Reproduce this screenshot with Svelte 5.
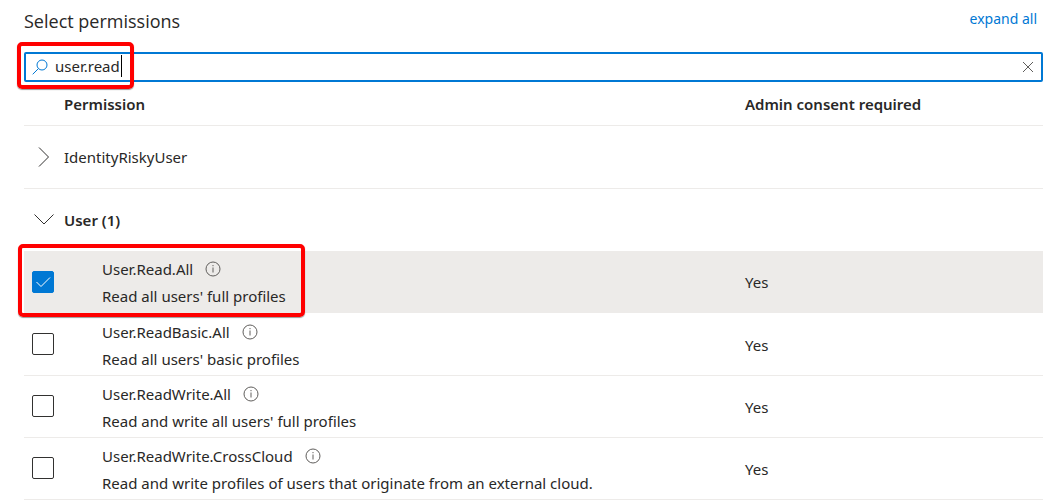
<script lang="ts">
	type Permission = {
		name: string;
		description: string;
		adminConsent: boolean;
		selected: boolean;
		highlighted?: boolean;
	};

	type Group = {
		name: string;
		expanded: boolean;
		permissions: Permission[];
	};

	let query = $state('user.read');

	let groups = $state<Group[]>([
		{ name: 'IdentityRiskyUser', expanded: false, permissions: [] },
		{
			name: 'User',
			expanded: true,
			permissions: [
				{
					name: 'User.Read.All',
					description: "Read all users' full profiles",
					adminConsent: true,
					selected: true,
					highlighted: true
				},
				{
					name: 'User.ReadBasic.All',
					description: "Read all users' basic profiles",
					adminConsent: true,
					selected: false
				},
				{
					name: 'User.ReadWrite.All',
					description: "Read and write all users' full profiles",
					adminConsent: true,
					selected: false
				},
				{
					name: 'User.ReadWrite.CrossCloud',
					description: 'Read and write profiles of users that originate from an external cloud.',
					adminConsent: true,
					selected: false
				}
			]
		}
	]);

	function selectedCount(group: Group): number {
		return group.permissions.filter((p) => p.selected).length;
	}

	function expandAll(event: MouseEvent) {
		event.preventDefault();
		for (const group of groups) group.expanded = true;
	}
</script>

<main class="panel">
	<header class="panel-header">
		<h1>Select permissions</h1>
		<a href="#expand" onclick={expandAll}>expand all</a>
	</header>

	<div class="search">
		<svg class="search-icon" viewBox="0 0 16 16" aria-hidden="true">
			<circle cx="10" cy="6" r="5" />
			<path d="M6.5 9.5 L0.7 15.3" />
		</svg>
		<input type="text" aria-label="Search permissions" bind:value={query} />
		<button class="clear" aria-label="Clear search" onclick={() => (query = '')}>
			<svg viewBox="0 0 12 12" aria-hidden="true">
				<path d="M1 1 L11 11 M11 1 L1 11" />
			</svg>
		</button>
		{#if query}
			<span class="caret"></span>
		{/if}
		<span class="callout callout-search"></span>
	</div>

	<table>
		<colgroup>
			<col class="col-toggle" />
			<col class="col-indent" />
			<col />
			<col class="col-consent" />
		</colgroup>
		<thead>
			<tr>
				<td></td>
				<th colspan="2" scope="col">Permission</th>
				<th scope="col">Admin consent required</th>
			</tr>
		</thead>
		<tbody>
			{#each groups as group (group.name)}
				<tr class="group">
					<td class="toggle-cell">
						<button
							class="toggle"
							aria-label="Toggle {group.name}"
							aria-expanded={group.expanded}
							onclick={() => (group.expanded = !group.expanded)}
						>
							<svg viewBox="0 0 22 22" aria-hidden="true">
								{#if group.expanded}
									<path d="M1.5 5.5 L11 15 L20.5 5.5" />
								{:else}
									<path d="M6 1.5 L15.5 11 L6 20.5" />
								{/if}
							</svg>
						</button>
					</td>
					<td colspan="3" class:active={selectedCount(group) > 0}>
						{group.name}{selectedCount(group) > 0 ? ` (${selectedCount(group)})` : ''}
					</td>
				</tr>
				{#if group.expanded}
					{#each group.permissions as permission (permission.name)}
						<tr class="permission" class:selected={permission.selected}>
							<td class="check-cell">
								<input type="checkbox" id={permission.name} bind:checked={permission.selected} />
								{#if permission.highlighted}
									<span class="callout callout-row"></span>
								{/if}
							</td>
							<td></td>
							<td>
								<div class="name">
									<label for={permission.name}>{permission.name}</label>
									<button class="info" aria-label="About {permission.name}">
										<svg viewBox="0 0 16 16" aria-hidden="true">
											<circle cx="8" cy="8" r="7" />
											<path d="M8 6.5 V11.5 M8 4 V5.2" />
										</svg>
									</button>
								</div>
								<div class="description">{permission.description}</div>
							</td>
							<td>{permission.adminConsent ? 'Yes' : 'No'}</td>
						</tr>
					{/each}
				{/if}
			{/each}
		</tbody>
	</table>
</main>

<style>
	:global(body) {
		background: #fff;
	}

	.panel {
		padding: 8px 15px 0 24px;
		color: #292827;
		font-family: 'Segoe UI', 'Noto Sans', 'Open Sans', sans-serif;
		font-size: 15px;
		line-height: 27px;
	}

	.panel-header {
		display: flex;
		justify-content: space-between;
		align-items: flex-start;
		height: 44px;
	}

	h1 {
		margin: 0;
		font-family: 'Segoe UI', 'Open Sans', sans-serif;
		font-size: 18px;
		font-weight: 400;
	}

	a {
		padding-right: 6px;
		color: #0078d4;
		font-size: 14px;
		line-height: 22px;
		text-decoration: none;
	}

	button {
		display: flex;
		padding: 0;
		border: 0;
		background: none;
		cursor: pointer;
	}

	svg {
		fill: none;
		stroke: #323130;
	}

	.search {
		position: relative;
		display: flex;
		align-items: center;
		gap: 7px;
		box-sizing: border-box;
		height: 30px;
		padding: 0 7px 0 6px;
		border: 2px solid #0078d4;
		border-radius: 2px;
	}

	.search-icon {
		width: 16px;
		height: 16px;
		stroke: #0078d4;
	}

	.search input {
		flex: 1;
		min-width: 0;
		padding: 0 0 2px;
		border: 0;
		outline: 0;
		background: none;
		color: inherit;
		font: inherit;
		line-height: 22px;
	}

	.clear svg {
		width: 12px;
		height: 12px;
		stroke: #605e5c;
	}

	.caret {
		position: absolute;
		top: 1px;
		left: 95px;
		width: 1px;
		height: 22px;
		background: #000;
	}

	.callout {
		position: absolute;
		box-sizing: border-box;
		border: 4px solid #f00;
		border-radius: 5px;
		box-shadow: 0 1px 1px rgba(0, 0, 0, 0.4);
		pointer-events: none;
	}

	.callout-search {
		top: -12px;
		left: -9px;
		width: 117px;
		height: 47px;
	}

	.callout-row {
		top: -8px;
		left: -6px;
		width: 287px;
		height: 73px;
		z-index: 1;
	}

	table {
		width: 100%;
		border-collapse: separate;
		border-spacing: 0;
		table-layout: fixed;
	}

	.col-toggle {
		width: 40px;
	}

	.col-indent {
		width: 38px;
	}

	.col-consent {
		width: 298px;
	}

	th,
	td {
		box-sizing: border-box;
		padding: 0;
		border-bottom: 1px solid #edebe9;
		text-align: left;
		vertical-align: middle;
	}

	thead tr {
		height: 44px;
	}

	th {
		padding-top: 2px;
		font-weight: 600;
	}

	.group {
		height: 63px;
	}

	.permission {
		height: 62px;
	}

	.permission td {
		padding-top: 2px;
	}

	.permission.selected td {
		padding-top: 0;
		border-bottom-color: #fff;
		background: #edebe9;
		background-clip: padding-box;
	}

	.active {
		font-weight: 600;
	}

	.toggle {
		margin-left: 9px;
	}

	.toggle svg {
		width: 22px;
		height: 22px;
	}

	.permission .check-cell,
	.permission.selected .check-cell {
		position: relative;
		padding: 0 0 2px 8px;
	}

	.check-cell input {
		display: block;
		appearance: none;
		box-sizing: border-box;
		width: 22px;
		height: 22px;
		margin: 0;
		border: 1px solid #323130;
		border-radius: 2px;
		background: #fff;
	}

	.check-cell input:checked {
		border-color: #0078d4;
		background: #0078d4
			url("data:image/svg+xml,%3Csvg xmlns='http://www.w3.org/2000/svg' viewBox='0 0 20 20'%3E%3Cpath d='M3.5 10 L8 14.5 L17 5.5' fill='none' stroke='white'/%3E%3C/svg%3E");
	}

	.name {
		display: flex;
		align-items: center;
		gap: 12px;
	}

	.info svg {
		width: 16px;
		height: 16px;
		stroke: #605e5c;
	}
</style>
